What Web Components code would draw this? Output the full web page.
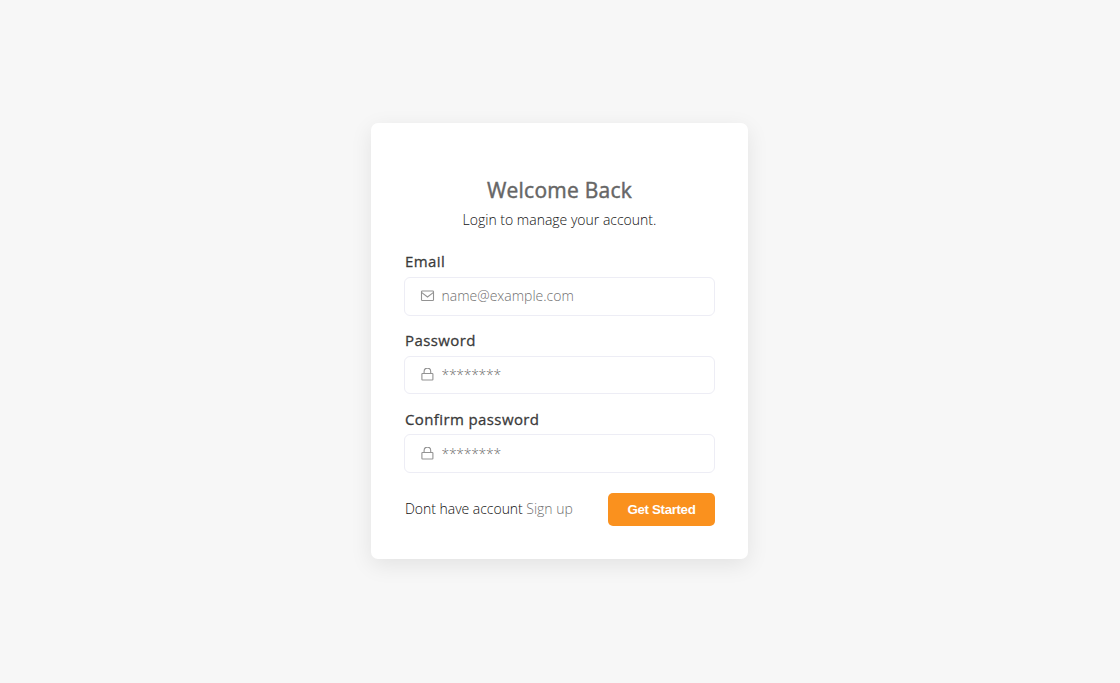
<!DOCTYPE html>
<html lang="en">
<head>
<meta charset="utf-8">
<title>Login</title>
<style>
html, body { height: 100%; }
body { margin: 0; background: #f7f7f7; font-family: "Open Sans", sans-serif; }
</style>
</head>
<body>
<login-page></login-page>
<script>
const icons = {
  mail: '<rect x="1.500" y="2" width="12" height="9.500" rx=".8"/><path d="M1.800 3.600 7.500 8l5.700-4.400"/>',
  lock: '<rect x="1.900" y="5.500" width="11" height="6.500" rx=".6"/><path d="M4.100 5.500V3.400a3.300 3.300 0 0 1 6.600 0v2.100"/>'
};
class Base extends HTMLElement {
  connectedCallback() {
    if (!this.shadowRoot) this.attachShadow({ mode: 'open' }).innerHTML = this.render();
  }
}
customElements.define('login-card', class extends Base {
  render() {
    return `<style>
      :host { display: block; box-sizing: border-box; width: 377px; height: 436px; padding: 52px 33px 33px; background: #fff; border-radius: 7px; box-shadow: 0 6px 22px rgba(0,0,0,.085); }
    </style><slot></slot>`;
  }
});
customElements.define('card-heading', class extends Base {
  render() {
    return `<style>
      :host { display: block; text-align: center; }
      h1 { margin: 0; font-size: 21px; line-height: 30px; font-weight: 400; letter-spacing: .25px; -webkit-text-stroke: .45px #666; color: #666; }
      p { margin: 4px 0 0; font-size: 14px; line-height: 22px; font-weight: 300; color: #111; }
    </style><h1><slot name="title"></slot></h1><p><slot></slot></p>`;
  }
});
customElements.define('form-field', class extends Base {
  render() {
    const hint = this.getAttribute('placeholder');
    return `<style>
      :host { display: block; }
      label { display: block; padding-left: 1px; height: 25.800px; margin-top: -.3px; font-size: 15px; line-height: 20px; font-weight: 400; letter-spacing: .39px; -webkit-text-stroke: .28px #3a3a3a; color: #3a3a3a; }
      .box { display: flex; align-items: center; box-sizing: border-box; height: 38.500px; padding: 0 16px 0 15px; border: 1px solid #ededf5; border-radius: 6px; }
      svg { flex: none; width: 15px; height: 14px; margin-right: 6.500px; fill: none; stroke: #939393; stroke-width: 1.1; }
      input { flex: 1; min-width: 0; height: 22px; margin: 0; padding: 0; border: 0; outline: 0; background: none; font: 300 14px/22px "Open Sans", sans-serif; letter-spacing: ${hint[0] === '*' ? '-.3px' : '0'}; }
      input::placeholder { color: #707070; opacity: 1; }
    </style><label for="i">${this.getAttribute('label')}</label>
    <div class="box"><svg viewBox="0 0 15 14">${icons[this.getAttribute('icon')]}</svg><input id="i" placeholder="${hint}"></div>`;
  }
});
customElements.define('action-button', class extends Base {
  render() {
    return `<style>
      :host { display: block; }
      button { display: block; width: 107px; height: 33px; padding: 0; border: 0; border-radius: 5px; background: #fa911e; color: #fff; font: bold 13.333px "Liberation Sans", Arial, sans-serif; letter-spacing: -.36px; }
    </style><button><slot></slot></button>`;
  }
});
customElements.define('login-page', class extends Base {
  render() {
    return `<style>
      :host { display: flex; min-height: 100%; align-items: flex-start; justify-content: center; box-sizing: border-box; padding: 123px 1px 0 0; }
      .fields { display: flex; flex-direction: column; gap: 14.700px; margin-top: 20.500px; }
      .foot { display: flex; align-items: center; justify-content: space-between; margin-top: 20px; }
      .foot p { margin: 0 0 0 1px; font-size: 14px; line-height: 22px; font-weight: 300; letter-spacing: -.03px; color: #111; }
      a { color: #707070; text-decoration: none; }
    </style>
    <login-card>
      <card-heading><span slot="title">Welcome Back</span>Login to manage your account.</card-heading>
      <div class="fields">
        <form-field label="Email" icon="mail" placeholder="name@example.com"></form-field>
        <form-field label="Password" icon="lock" placeholder="********"></form-field>
        <form-field label="Confirm password" icon="lock" placeholder="********"></form-field>
      </div>
      <div class="foot"><p>Dont have account <a href="#">Sign up</a></p><action-button>Get Started</action-button></div>
    </login-card>`;
  }
});
</script>
</body>
</html>
